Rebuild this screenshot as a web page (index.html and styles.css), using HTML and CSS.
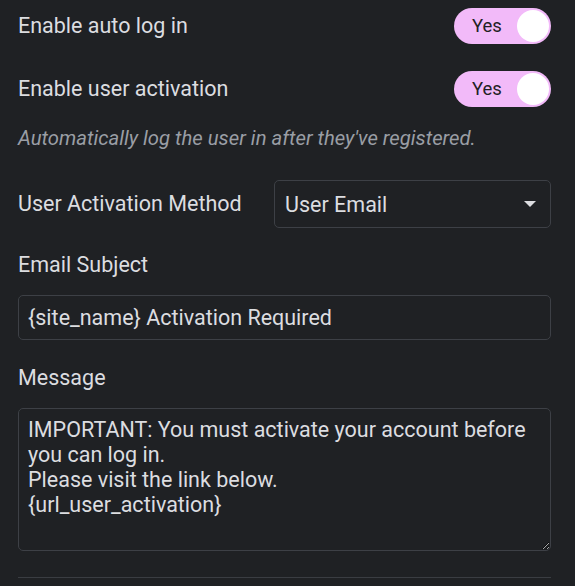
FILE: index.html
```html
<!DOCTYPE html>
<html lang="en">
<head>
    <meta charset="UTF-8">
    <meta name="viewport" content="width=device-width, initial-scale=1.0">
    <title>User Activation Settings</title>
    <link rel="stylesheet" href="styles.css">
</head>
<body>
    <div class="panel">
        <!-- Toggles -->
        <div class="row">
            <span class="label">Enable auto log in</span>
            <span class="toggle"><span class="toggle-text">Yes</span><span class="knob"></span></span>
        </div>
        <div class="row">
            <span class="label">Enable user activation</span>
            <span class="toggle"><span class="toggle-text">Yes</span><span class="knob"></span></span>
        </div>
        <p class="hint">Automatically log the user in after they've registered.</p>

        <!-- Method -->
        <div class="row select-row">
            <span class="label">User Activation Method</span>
            <div class="select">
                <span>User Email</span>
                <svg class="arrow" width="14" height="8" viewBox="0 0 14 8"><path d="M1 1h12L7 7z" fill="#dcdde0"/></svg>
            </div>
        </div>

        <!-- Email -->
        <div class="field">
            <label class="label">Email Subject</label>
            <input type="text" class="input" value="{site_name} Activation Required">
        </div>
        <div class="field">
            <label class="label">Message</label>
            <textarea class="textarea">IMPORTANT: You must activate your account before you can log in.
Please visit the link below.
{url_user_activation}</textarea>
        </div>
        <div class="divider"></div>
    </div>
</body>
</html>
```

FILE: styles.css
```css
html, body {
    margin: 0;
    background: #1f2124;
}
body {
    font-family: Roboto, "Liberation Sans", sans-serif;
    color: #dcdde0;
    color-scheme: dark;
}
.panel {
    padding: 8px 24px 0 18px;
}
.row {
    display: flex;
    align-items: center;
    justify-content: space-between;
    height: 36px;
    margin-bottom: 27px;
}
.label {
    display: block;
    font-size: 21.5px;
    line-height: 24px;
}
.toggle {
    display: flex;
    align-items: center;
    justify-content: space-between;
    width: 97px;
    height: 36px;
    box-sizing: border-box;
    padding: 0 2px 0 18px;
    background: #f2baf9;
    border-radius: 18px;
}
.toggle-text {
    font-size: 18.5px;
    color: #1f2124;
}
.knob {
    width: 32px;
    height: 32px;
    border-radius: 50%;
    background: #fff;
}
.hint {
    margin: -7px 0 0;
    font-size: 20.3px;
    line-height: 22px;
    font-style: italic;
    color: #9a9ea5;
}
.select-row {
    height: 48px;
    margin: 31px 0 25px;
}
.select {
    display: flex;
    align-items: center;
    justify-content: space-between;
    width: 277px;
    height: 48px;
    box-sizing: border-box;
    padding: 0 13px 0 10px;
    border: 1px solid #3d4046;
    border-radius: 5px;
    font-size: 21.5px;
}
.field {
    margin-bottom: 26px;
}
.field .label {
    margin-bottom: 18px;
}
.input, .textarea {
    display: block;
    width: 100%;
    box-sizing: border-box;
    margin: 0;
    background: #1f2124;
    color: #dcdde0;
    border: 1px solid #3d4046;
    border-radius: 5px;
    font-family: Roboto, "Liberation Sans", sans-serif;
    font-size: 21.5px;
    outline: none;
}
.input {
    height: 45px;
    padding: 0 9px;
}
.textarea {
    height: 143px;
    padding: 8px 9px;
    line-height: 25px;
    resize: vertical;
}
.field:last-of-type {
    margin-bottom: 28px;
}
.divider {
    height: 1px;
    background: #3a3d42;
}
```
